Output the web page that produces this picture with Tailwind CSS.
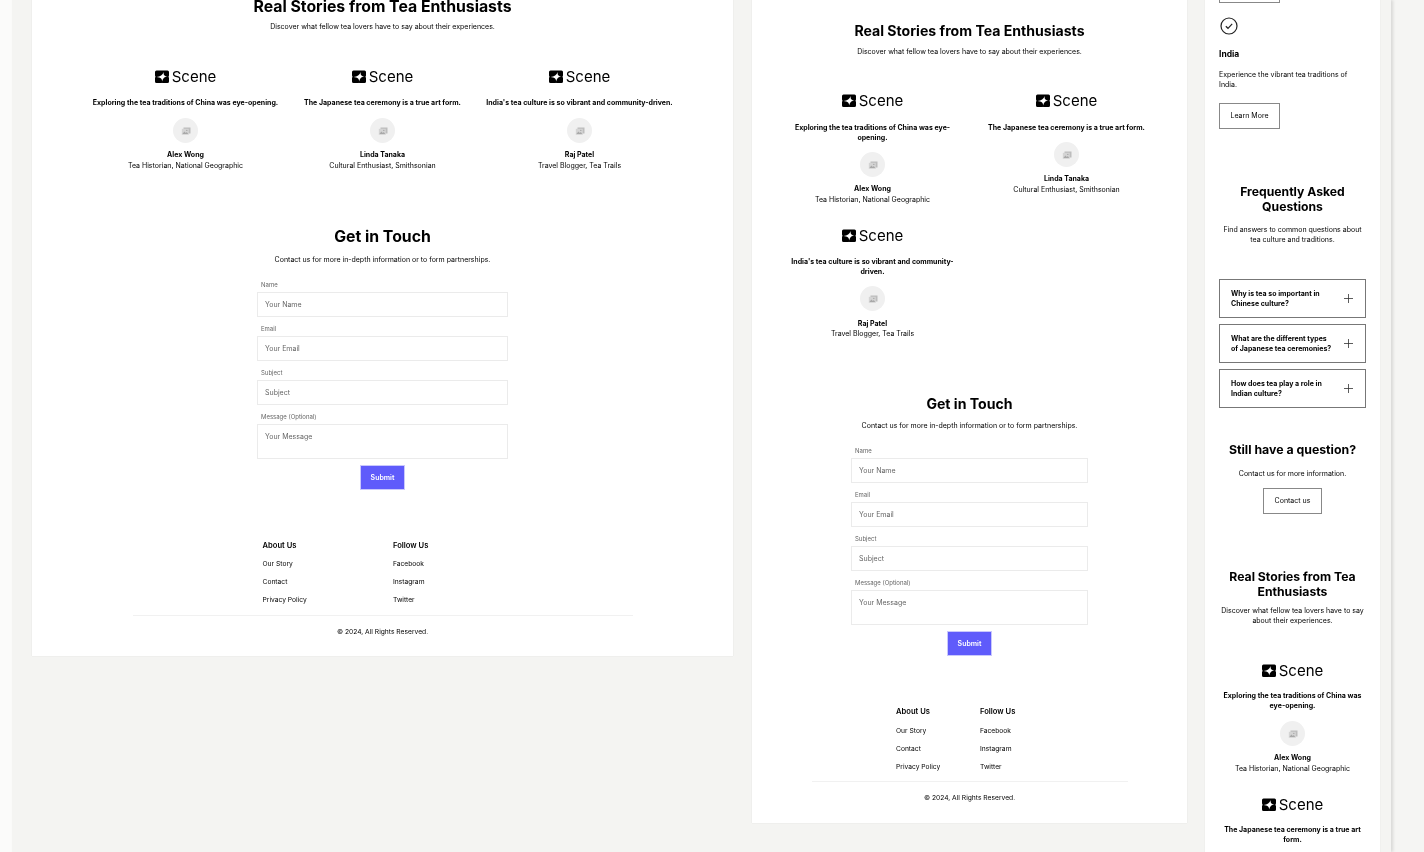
<!DOCTYPE html>
<html>
<head>
<meta charset="utf-8">
<script src="https://cdn.jsdelivr.net/npm/@tailwindcss/browser@4"></script>
</head>
<body class="m-0">
<svg width="0" height="0" class="absolute">
  <defs>
    <symbol id="logo" viewBox="0 0 14 14"><path fill="#000" d="M1.5 0.5H12.5Q14 0.5 14 2V5.5Q13 6.7 14 8V11.5Q14 13 12.5 13H7.5Q7 12.6 6.5 13H1.5Q0 13 0 11.5V8Q1 6.7 0 5.5V2Q0 0.5 1.5 0.5Z"/><path fill="#fff" d="M8.6 2C8.4 5.2 9.4 6.2 12.6 6.6 9.6 6.9 8 8 7.2 11.6 7 8.4 5.4 7.4 1.6 7 5.2 6.4 7.8 5.2 8.6 2Z"/></symbol>
    <symbol id="img" viewBox="0 0 10 10"><path fill="#bdbdbd" d="M2.5 1.5H9.5V7.5H2.5Z"/><path fill="#d4d4d4" d="M.8 2.8H7.8V8.8H.8Z"/><path fill="#a8a8a8" d="M1.4 8 3.4 5.6 4.8 7 5.8 6 7.2 8Z"/><circle cx="5.8" cy="4.4" r=".7" fill="#a8a8a8"/></symbol>
  </defs>
</svg>
<div class="w-[1424px] h-[852px] overflow-hidden flex bg-[#f5f5f3] font-['Inter','Liberation_Sans',sans-serif] text-black text-[7px] leading-[10px] [will-change:transform]">
  <div class="w-[12px] shrink-0 bg-[#fbfbfa]"></div>
  <div class="w-[1379px] shrink-0 h-full bg-[#f4f4f2] pl-[20px] flex items-start gap-[19px] shadow-[2px_0_3px_rgba(0,0,0,0.12)]">

    <!-- Desktop frame -->
    <main class="w-[701px] shrink-0 -mt-[3px] bg-white flex flex-col items-center pb-[19px] shadow-[0_0_1px_rgba(0,0,0,0.12)]">
      <h2 class="text-[15.8px] leading-[20px] font-bold">Real Stories from Tea Enthusiasts</h2>
      <p class="mt-[5px]">Discover what fellow tea lovers have to say about their experiences.</p>
      <div class="mt-[38px] w-[591px] grid grid-cols-3 text-center">
        <div class="flex flex-col items-center">
          <div class="flex items-center gap-[3px] h-[14px]"><svg class="w-[14px] h-[14px]"><use href="#logo"/></svg><span class="text-[15px] leading-[14px]">Scene</span></div>
          <p class="mt-[14px] font-bold">Exploring the tea traditions of China was eye-opening.</p>
          <div class="mt-[10px] w-[25px] h-[25px] rounded-full bg-[#f0f0f0] flex items-center justify-center"><svg class="w-[10px] h-[10px]"><use href="#img"/></svg></div>
          <p class="mt-[7px] font-bold">Alex Wong</p>
          <p class="mt-px">Tea Historian, National Geographic</p>
        </div>
        <div class="flex flex-col items-center">
          <div class="flex items-center gap-[3px] h-[14px]"><svg class="w-[14px] h-[14px]"><use href="#logo"/></svg><span class="text-[15px] leading-[14px]">Scene</span></div>
          <p class="mt-[14px] font-bold">The Japanese tea ceremony is a true art form.</p>
          <div class="mt-[10px] w-[25px] h-[25px] rounded-full bg-[#f0f0f0] flex items-center justify-center"><svg class="w-[10px] h-[10px]"><use href="#img"/></svg></div>
          <p class="mt-[7px] font-bold">Linda Tanaka</p>
          <p class="mt-px">Cultural Enthusiast, Smithsonian</p>
        </div>
        <div class="flex flex-col items-center">
          <div class="flex items-center gap-[3px] h-[14px]"><svg class="w-[14px] h-[14px]"><use href="#logo"/></svg><span class="text-[15px] leading-[14px]">Scene</span></div>
          <p class="mt-[14px] font-bold">India's tea culture is so vibrant and community-driven.</p>
          <div class="mt-[10px] w-[25px] h-[25px] rounded-full bg-[#f0f0f0] flex items-center justify-center"><svg class="w-[10px] h-[10px]"><use href="#img"/></svg></div>
          <p class="mt-[7px] font-bold">Raj Patel</p>
          <p class="mt-px">Travel Blogger, Tea Trails</p>
        </div>
      </div>
      <h2 class="mt-[56px] text-[15.8px] leading-[20px] font-bold">Get in Touch</h2>
      <p class="mt-[8px]">Contact us for more in-depth information or to form partnerships.</p>
      <form class="mt-[15px] w-[251px] flex flex-col">
        <label class="ml-[4px] text-[6px] text-[#666]">Name</label>
        <input placeholder="Your Name" class="mt-[2px] h-[25px] border border-[#ebebeb] pl-[7px] text-[7px] placeholder:text-[#666] outline-none">
        <label class="mt-[7px] ml-[4px] text-[6px] text-[#666]">Email</label>
        <input placeholder="Your Email" class="mt-[2px] h-[25px] border border-[#ebebeb] pl-[7px] text-[7px] placeholder:text-[#666] outline-none">
        <label class="mt-[7px] ml-[4px] text-[6px] text-[#666]">Subject</label>
        <input placeholder="Subject" class="mt-[2px] h-[25px] border border-[#ebebeb] pl-[7px] text-[7px] placeholder:text-[#666] outline-none">
        <label class="mt-[7px] ml-[4px] text-[6px] text-[#666]">Message (Optional)</label>
        <textarea placeholder="Your Message" class="mt-[2px] h-[35px] border border-[#ebebeb] pl-[7px] pt-[7px] text-[7px] leading-[10px] placeholder:text-[#666] outline-none resize-none"></textarea>
        <button type="button" class="mt-[6px] self-center w-[45px] h-[25px] bg-[#5f5bfb] border border-[#c9c8fc] text-white font-semibold">Submit</button>
      </form>
      <div class="mt-[51px] w-[240px] flex text-[6.7px]">
        <div class="w-[130.5px] flex flex-col gap-[8px]">
          <h3 class="font-semibold text-[7.6px]">About Us</h3><a>Our Story</a><a>Contact</a><a>Privacy Policy</a>
        </div>
        <div class="flex flex-col gap-[8px]">
          <h3 class="font-semibold text-[7.6px]">Follow Us</h3><a>Facebook</a><a>Instagram</a><a>Twitter</a>
        </div>
      </div>
      <div class="mt-[10px] w-[500px] h-px bg-[#f1f1f1]"></div>
      <p class="mt-[11px] text-[6.7px]">© 2024, All Rights Reserved.</p>
    </main>

    <!-- Tablet frame -->
    <main class="w-[435px] shrink-0 bg-white flex flex-col items-center pt-[21px] pb-[20px] shadow-[0_0_1px_rgba(0,0,0,0.12)]">
      <h2 class="text-[14.1px] leading-[20px] font-bold">Real Stories from Tea Enthusiasts</h2>
      <p class="mt-[6px]">Discover what fellow tea lovers have to say about their experiences.</p>
      <div class="mt-[37px] w-[388px] grid grid-cols-2 gap-y-[24px] text-center">
        <div class="flex flex-col items-center">
          <div class="flex items-center gap-[3px] h-[14px]"><svg class="w-[14px] h-[14px]"><use href="#logo"/></svg><span class="text-[15px] leading-[14px]">Scene</span></div>
          <p class="mt-[15px] w-[170px] font-bold">Exploring the tea traditions of China was eye-opening.</p>
          <div class="mt-[9px] w-[25px] h-[25px] rounded-full bg-[#f0f0f0] flex items-center justify-center"><svg class="w-[10px] h-[10px]"><use href="#img"/></svg></div>
          <p class="mt-[7px] font-bold">Alex Wong</p>
          <p class="mt-px">Tea Historian, National Geographic</p>
        </div>
        <div class="flex flex-col items-center">
          <div class="flex items-center gap-[3px] h-[14px]"><svg class="w-[14px] h-[14px]"><use href="#logo"/></svg><span class="text-[15px] leading-[14px]">Scene</span></div>
          <p class="mt-[15px] w-[170px] font-bold">The Japanese tea ceremony is a true art form.</p>
          <div class="mt-[9px] w-[25px] h-[25px] rounded-full bg-[#f0f0f0] flex items-center justify-center"><svg class="w-[10px] h-[10px]"><use href="#img"/></svg></div>
          <p class="mt-[7px] font-bold">Linda Tanaka</p>
          <p class="mt-px">Cultural Enthusiast, Smithsonian</p>
        </div>
        <div class="flex flex-col items-center">
          <div class="flex items-center gap-[3px] h-[14px]"><svg class="w-[14px] h-[14px]"><use href="#logo"/></svg><span class="text-[15px] leading-[14px]">Scene</span></div>
          <p class="mt-[14px] w-[170px] font-bold">India's tea culture is so vibrant and community-driven.</p>
          <div class="mt-[9px] w-[25px] h-[25px] rounded-full bg-[#f0f0f0] flex items-center justify-center"><svg class="w-[10px] h-[10px]"><use href="#img"/></svg></div>
          <p class="mt-[8px] font-bold">Raj Patel</p>
          <p>Travel Blogger, Tea Trails</p>
        </div>
      </div>
      <h2 class="mt-[55px] text-[14.1px] leading-[20px] font-bold">Get in Touch</h2>
      <p class="mt-[7px]">Contact us for more in-depth information or to form partnerships.</p>
      <form class="mt-[15px] w-[237px] flex flex-col">
        <label class="ml-[4px] text-[6px] text-[#666]">Name</label>
        <input placeholder="Your Name" class="mt-[2px] h-[25px] border border-[#ebebeb] pl-[7px] text-[7px] placeholder:text-[#666] outline-none">
        <label class="mt-[7px] ml-[4px] text-[6px] text-[#666]">Email</label>
        <input placeholder="Your Email" class="mt-[2px] h-[25px] border border-[#ebebeb] pl-[7px] text-[7px] placeholder:text-[#666] outline-none">
        <label class="mt-[7px] ml-[4px] text-[6px] text-[#666]">Subject</label>
        <input placeholder="Subject" class="mt-[2px] h-[25px] border border-[#ebebeb] pl-[7px] text-[7px] placeholder:text-[#666] outline-none">
        <label class="mt-[7px] ml-[4px] text-[6px] text-[#666]">Message (Optional)</label>
        <textarea placeholder="Your Message" class="mt-[2px] h-[35px] border border-[#ebebeb] pl-[7px] pt-[7px] text-[7px] leading-[10px] placeholder:text-[#666] outline-none resize-none"></textarea>
        <button type="button" class="mt-[6px] self-center w-[45px] h-[25px] bg-[#5f5bfb] border border-[#c9c8fc] text-white font-semibold">Submit</button>
      </form>
      <div class="mt-[51px] w-[147px] flex text-[6.7px]">
        <div class="w-[84px] flex flex-col gap-[8px]">
          <h3 class="font-semibold text-[7.6px]">About Us</h3><a class="mt-px">Our Story</a><a>Contact</a><a>Privacy Policy</a>
        </div>
        <div class="flex flex-col gap-[8px]">
          <h3 class="font-semibold text-[7.6px]">Follow Us</h3><a class="mt-px">Facebook</a><a>Instagram</a><a>Twitter</a>
        </div>
      </div>
      <div class="mt-[9px] w-[316px] h-px bg-[#f1f1f1]"></div>
      <p class="mt-[11px] text-[6.7px]">© 2024, All Rights Reserved.</p>
    </main>

    <!-- Mobile frame -->
    <main class="w-[175px] shrink-0 -ml-px -mt-[23px] bg-white flex flex-col px-[14px] pb-[40px] shadow-[0_0_1px_rgba(0,0,0,0.1)]">
      <button type="button" class="w-[61px] h-[26px] border border-[#888] shrink-0">Learn More</button>
      <svg class="mt-[14px] w-[18px] h-[18px] ml-px" viewBox="0 0 18 18" fill="none" stroke="#222" stroke-width="1.2"><circle cx="9" cy="9" r="8"/><path d="M5.8 9.2 8 11.3 12.2 6.8"/></svg>
      <h3 class="mt-[14px] text-[8.5px] font-bold">India</h3>
      <p class="mt-[11px]">Experience the vibrant tea traditions of India.</p>
      <button type="button" class="mt-[13px] w-[61px] h-[26px] border border-[#888] shrink-0">Learn More</button>
      <h2 class="mt-[55px] text-[12.2px] leading-[15px] font-bold text-center">Frequently Asked Questions</h2>
      <p class="mt-[11px] text-center">Find answers to common questions about tea culture and traditions.</p>
      <div class="mt-[34px] flex flex-col gap-[6px]">
        <div class="h-[39px] border border-[#777] pl-[11px] pr-[12px] flex items-center justify-between"><span class="w-[102px] font-bold">Why is tea so important in Chinese culture?</span><svg class="w-[9px] h-[9px]" viewBox="0 0 9 9" stroke="#333" stroke-width=".8"><path d="M4.5 0V9M0 4.5H9"/></svg></div>
        <div class="h-[39px] border border-[#777] pl-[11px] pr-[12px] flex items-center justify-between"><span class="w-[102px] font-bold">What are the different types of Japanese tea ceremonies?</span><svg class="w-[9px] h-[9px]" viewBox="0 0 9 9" stroke="#333" stroke-width=".8"><path d="M4.5 0V9M0 4.5H9"/></svg></div>
        <div class="h-[39px] border border-[#777] pl-[11px] pr-[12px] flex items-center justify-between"><span class="w-[102px] font-bold">How does tea play a role in Indian culture?</span><svg class="w-[9px] h-[9px]" viewBox="0 0 9 9" stroke="#333" stroke-width=".8"><path d="M4.5 0V9M0 4.5H9"/></svg></div>
      </div>
      <h2 class="mt-[32px] text-[12.3px] leading-[20px] font-bold text-center">Still have a question?</h2>
      <p class="mt-[9px] text-center">Contact us for more information.</p>
      <button type="button" class="mt-[9px] self-center w-[59px] h-[26px] border border-[#888] shrink-0">Contact us</button>
      <h2 class="mt-[55px] text-[12.2px] leading-[15px] font-bold text-center">Real Stories from Tea Enthusiasts</h2>
      <p class="mt-[7px] text-center">Discover what fellow tea lovers have to say about their experiences.</p>
      <div class="mt-[38px] flex flex-col items-center text-center">
        <div class="flex items-center gap-[3px] h-[14px]"><svg class="w-[14px] h-[14px]"><use href="#logo"/></svg><span class="text-[15px] leading-[14px]">Scene</span></div>
        <p class="mt-[13px] font-bold">Exploring the tea traditions of China was eye-opening.</p>
        <div class="mt-[10px] w-[25px] h-[25px] rounded-full bg-[#f0f0f0] flex items-center justify-center"><svg class="w-[10px] h-[10px]"><use href="#img"/></svg></div>
        <p class="mt-[7px] font-bold">Alex Wong</p>
        <p class="mt-px">Tea Historian, National Geographic</p>
        <div class="mt-[24px] flex items-center gap-[3px] h-[14px]"><svg class="w-[14px] h-[14px]"><use href="#logo"/></svg><span class="text-[15px] leading-[14px]">Scene</span></div>
        <p class="mt-[13px] font-bold">The Japanese tea ceremony is a true art form.</p>
      </div>
    </main>
  </div>
</div>
</body>
</html>
